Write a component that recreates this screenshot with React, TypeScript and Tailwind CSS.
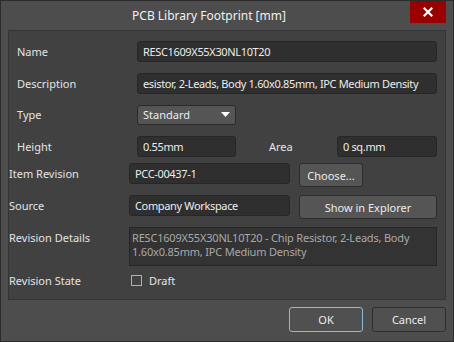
import React from "react";

const font = { fontFamily: '"Noto Sans", "Open Sans", sans-serif' };

function Input({ text, className = "" }: { text: string; className?: string }) {
  return (
    <div
      className={`h-[21px] rounded-[3px] border border-[#262626] bg-[#2f2f2f] flex items-center pl-[5px] text-[#ececec] tracking-[-0.35px] whitespace-nowrap overflow-hidden ${className}`}
    >
      {text}
    </div>
  );
}

export default function App() {
  return (
    <div
      style={font}
      className="w-[454px] h-[342px] bg-[#4d4d4d] border border-[#2b2b2b] flex flex-col text-[11px] text-[#e4e4e4] leading-none overflow-hidden"
    >
      {/* Title bar */}
      <div className="relative h-[29px] flex items-center justify-center">
        <span className="text-[12px] text-[#f0f0f0] -ml-[36px] mt-[1px]">PCB Library Footprint [mm]</span>
        <div className="absolute right-[7px] top-0 w-[36px] h-[22px] bg-[#9a0000] flex items-center justify-center">
          <svg width="10" height="10" viewBox="0 0 10 10">
            <path d="M1.5 1.5 L8.5 8.5 M8.5 1.5 L1.5 8.5" stroke="#fff" strokeWidth="2.2" strokeLinecap="square" />
          </svg>
        </div>
      </div>

      {/* Panel */}
      <div className="mx-[7px] h-[270px] bg-[#414141] border border-[#353535] flex flex-col">
        <div className="pl-[8px] pr-[8px] flex flex-col">
          <div className="mt-[9px] h-[22px] flex items-center">
            <div className="w-[120px]">Name</div>
            <Input text="RESC1609X55X30NL10T20" className="flex-1" />
          </div>
          <div className="mt-[10px] h-[22px] flex items-center">
            <div className="w-[120px]">Description</div>
            <Input text="esistor, 2-Leads, Body 1.60x0.85mm, IPC Medium Density" className="flex-1" />
          </div>
          <div className="mt-[10px] h-[21px] flex items-center">
            <div className="w-[120px]">Type</div>
            <div className="w-[99px] h-[20px] rounded-[3px] border border-[#2a2a2a] bg-[#555555] flex items-center justify-between pl-[5px] pr-[5px] text-[#ececec]">
              <span>Standard</span>
              <svg width="9" height="5" viewBox="0 0 9 5">
                <path d="M0 0 L9 0 L4.5 5 Z" fill="#ffffff" />
              </svg>
            </div>
          </div>
          <div className="mt-[11px] h-[21px] flex items-center">
            <div className="w-[120px]">Height</div>
            <Input text="0.55mm" className="w-[99px]" />
            <div className="w-[101px] pl-[33px]">Area</div>
            <Input text="0 sq.mm" className="flex-1" />
          </div>
        </div>

        <div className="pr-[8px] flex flex-col">
          <div className="mt-[6px] h-[24px] flex items-start">
            <div className="w-[120px] h-[21px] flex items-center">Item Revision</div>
            <Input text="PCC-00437-1" className="w-[161px]" />
            <div className="ml-[9px] w-[64px] h-[24px] rounded-[3px] border border-[#2c2c2c] bg-[#555555] flex items-center justify-center text-[#ececec]">
              Choose...
            </div>
          </div>
          <div className="mt-[8px] h-[24px] flex items-start">
            <div className="w-[120px] h-[21px] flex items-center">Source</div>
            <Input text="Company Workspace" className="w-[161px]" />
            <div className="ml-[9px] flex-1 h-[24px] rounded-[3px] border border-[#2c2c2c] bg-[#555555] flex items-center justify-center text-[#ececec]">
              Show in Explorer
            </div>
          </div>
          <div className="mt-[8px] h-[39px] flex items-start">
            <div className="w-[120px] pt-[5px]">Revision Details</div>
            <div className="flex-1 h-[39px] border border-[#262626] bg-[#333333] pl-[2px] pt-[3px] text-[#a9a9a9] leading-[14px] tracking-[-0.2px]">
              RESC1609X55X30NL10T20 - Chip Resistor, 2-Leads, Body
              <br />
              1.60x0.85mm, IPC Medium Density
            </div>
          </div>
          <div className="mt-[8px] h-[13px] flex items-center">
            <div className="w-[122px]">Revision State</div>
            <div className="w-[11px] h-[11px] border border-[#b0b0b0]" />
            <div className="ml-[7px]">Draft</div>
          </div>
        </div>
      </div>

      {/* Buttons */}
      <div className="mt-[7px] pr-[7px] flex justify-end gap-[9px]">
        <div className="w-[74px] h-[25px] rounded-[3px] border border-[#8fb6dc] bg-[#505050] flex items-center justify-center text-[#ececec]">
          OK
        </div>
        <div className="w-[74px] h-[25px] rounded-[3px] border border-[#2e2e2e] bg-[#505050] flex items-center justify-center text-[#ececec]">
          Cancel
        </div>
      </div>
    </div>
  );
}
